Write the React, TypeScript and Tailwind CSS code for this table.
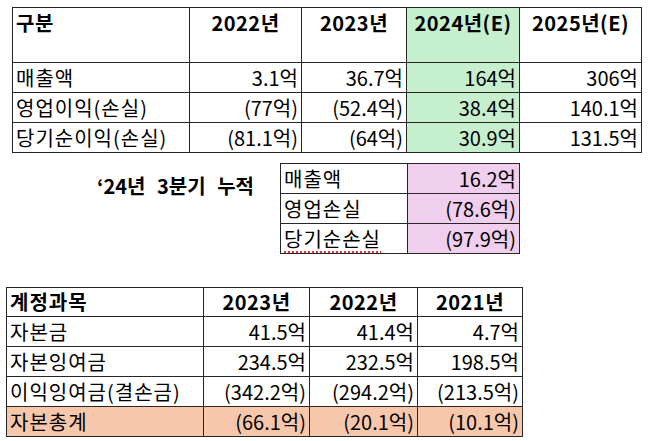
const topRows = [
  { label: '매출액', values: ['3.1억', '36.7억', '164억', '306억'] },
  { label: '영업이익(손실)', values: ['(77억)', '(52.4억)', '38.4억', '140.1억'] },
  { label: '당기순이익(손실)', values: ['(81.1억)', '(64억)', '30.9억', '131.5억'] },
]

const quarterRows = [
  { label: '매출액', value: '16.2억', squiggle: false },
  { label: '영업손실', value: '(78.6억)', squiggle: false },
  { label: '당기순손실', value: '(97.9억)', squiggle: true },
]

const equityRows = [
  { label: '자본금', values: ['41.5억', '41.4억', '4.7억'], total: false },
  { label: '자본잉여금', values: ['234.5억', '232.5억', '198.5억'], total: false },
  { label: '이익잉여금(결손금)', values: ['(342.2억)', '(294.2억)', '(213.5억)'], total: false },
  { label: '자본총계', values: ['(66.1억)', '(20.1억)', '(10.1억)'], total: true },
]

const cell = 'border border-[#262626] p-0 leading-none'
const head = 'text-[20px] font-bold tracking-[0.5px]'
const label = 'pl-[3px] text-[20px] tracking-[1px]'
const num = 'text-right pr-[3px] text-[20px]'

export default function App() {
  return (
    <main className="w-[650px] h-[441px] bg-white text-black font-['Noto_Sans_CJK_KR',sans-serif] overflow-hidden">
      <div className="pt-[7px] pl-[12px]">
        <table className="table-fixed border-collapse">
          <thead>
            <tr className="h-[55px]">
              <th className={`${cell} ${head} w-[177px] align-top text-left pl-[3px] pt-[5px]`}>구분</th>
              <th className={`${cell} ${head} w-[112px] align-top pt-[5px]`}>2022년</th>
              <th className={`${cell} ${head} w-[105px] align-top pt-[5px]`}>2023년</th>
              <th className={`${cell} ${head} w-[113px] align-top pt-[5px] bg-[#c6efce]`}>2024년(E)</th>
              <th className={`${cell} ${head} w-[122px] align-top pt-[5px]`}>2025년(E)</th>
            </tr>
          </thead>
          <tbody>
            {topRows.map((row) => (
              <tr key={row.label} className="h-[30px]">
                <td className={`${cell} ${label}`}>{row.label}</td>
                {row.values.map((v, i) => (
                  <td key={i} className={`${cell} ${num} ${i === 2 ? 'bg-[#c6efce]' : ''}`}>
                    {v}
                  </td>
                ))}
              </tr>
            ))}
          </tbody>
        </table>
      </div>

      <div className="flex items-start pt-[10px]">
        <p className="w-[280px] pl-[97px] pt-[13px] text-[20px] font-bold leading-none [word-spacing:7px]">
          ‘24년 3분기 누적
        </p>
        <table className="table-fixed border-collapse">
          <tbody>
            {quarterRows.map((row) => (
              <tr key={row.label} className="h-[30px]">
                <td className={`${cell} ${label} w-[127px]`}>
                  <span
                    className={
                      row.squiggle
                        ? 'underline decoration-dotted decoration-red-500 underline-offset-[5px]'
                        : ''
                    }
                  >
                    {row.label}
                  </span>
                </td>
                <td className={`${cell} ${num} w-[112px] bg-[#f0cfee]`}>{row.value}</td>
              </tr>
            ))}
          </tbody>
        </table>
      </div>

      <div className="pt-[33px] pl-[6px]">
        <table className="table-fixed border-collapse">
          <thead>
            <tr className="h-[29px]">
              <th className={`${cell} ${head} w-[197px] text-left pl-[3px] tracking-[1px]`}>계정과목</th>
              <th className={`${cell} ${head} w-[106px]`}>2023년</th>
              <th className={`${cell} ${head} w-[108px]`}>2022년</th>
              <th className={`${cell} ${head} w-[105px]`}>2021년</th>
            </tr>
          </thead>
          <tbody>
            {equityRows.map((row) => (
              <tr key={row.label} className={`h-[30px] ${row.total ? 'bg-[#f7c7ac]' : ''}`}>
                <td className={`${cell} ${label}`}>{row.label}</td>
                {row.values.map((v, i) => (
                  <td key={i} className={`${cell} ${num}`}>
                    {v}
                  </td>
                ))}
              </tr>
            ))}
          </tbody>
        </table>
      </div>
    </main>
  )
}
